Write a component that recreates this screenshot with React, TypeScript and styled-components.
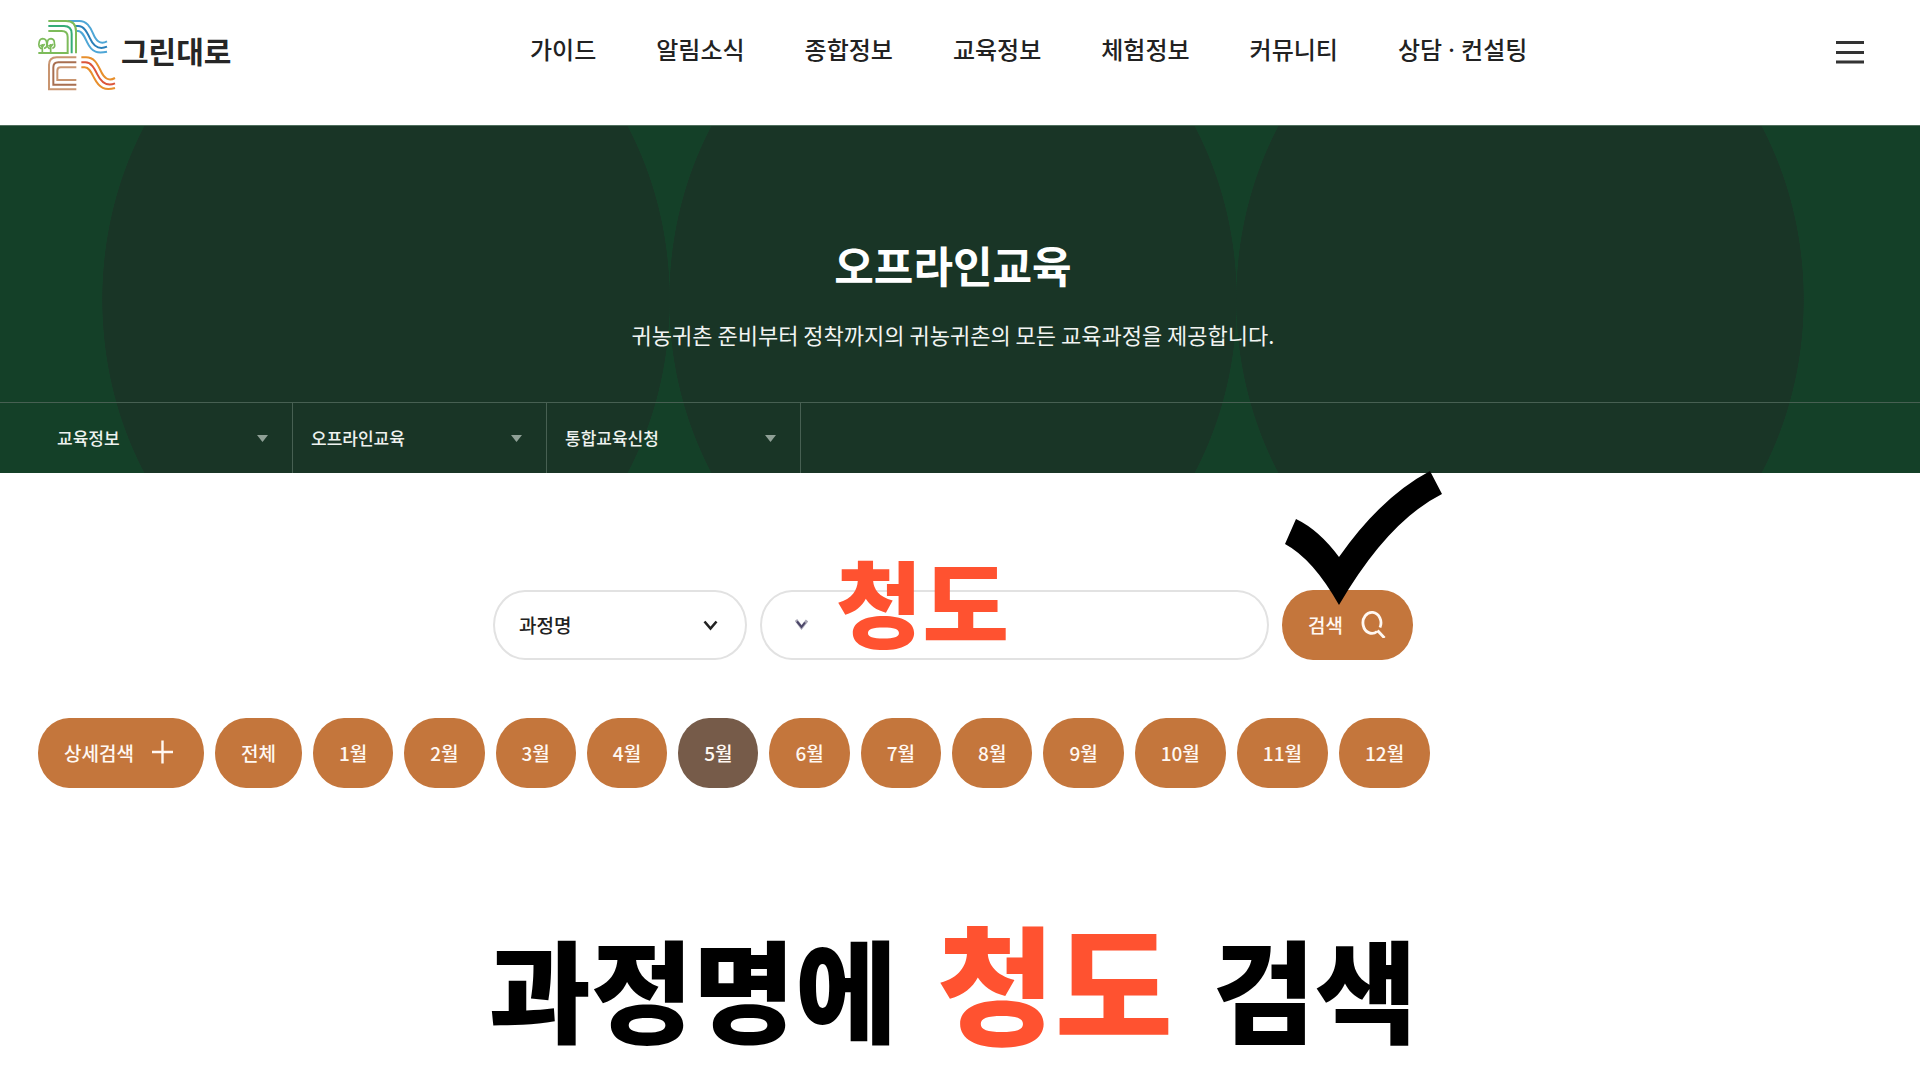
import React from "react";
import styled, { createGlobalStyle } from "styled-components";

const GlobalStyle = createGlobalStyle`
  *, *::before, *::after { box-sizing: border-box; }
  body {
    margin: 0;
    background: #fff;
    color: #222;
    font-family: "Noto Sans CJK KR", "Noto Sans", sans-serif;
  }
  h1, h2, p, ul { margin: 0; padding: 0; }
  button, input, select { font-family: inherit; margin: 0; }
`;

const Header = styled.header`
  display: flex;
  align-items: flex-start;
  height: 125px;
  padding: 20px 55px 0 38px;
`;

const LogoLink = styled.a`
  display: flex;
  align-items: flex-start;
  gap: 4px;
  width: 492px;
  color: #262626;
  font-size: 30px;
  font-weight: 700;
  line-height: 60px;
  text-decoration: none;

  svg { flex: none; }
`;

const Nav = styled.nav`
  flex: 1;

  ul {
    display: flex;
    gap: 60px;
    list-style: none;
  }
`;

const NavLink = styled.a`
  color: #222;
  font-family: "Noto Sans", "Noto Sans CJK KR", sans-serif;
  font-size: 24px;
  font-weight: 500;
  line-height: 60px;
  text-decoration: none;
  white-space: nowrap;
`;

const MenuButton = styled.button`
  display: grid;
  place-items: center;
  height: 64px;
  padding: 0;
  border: 0;
  background: none;
`;

const circle = (x: string) =>
  `radial-gradient(ellipse 284px 331px at ${x} 50%, #193526 99.8%, transparent 100%)`;

const Hero = styled.section`
  display: flex;
  flex-direction: column;
  justify-content: space-between;
  height: 348px;
  border-top: 1px solid #4f6f5d;
  background: ${circle("calc(50% - 574px)")}, ${circle("calc(50% - 7px)")},
    ${circle("calc(50% + 560px)")}, #144028;
  color: #fff;
`;

const HeroText = styled.div`
  padding: 106px 14px 0 0;
  text-align: center;

  h1 {
    font-size: 43px;
    font-weight: 700;
    line-height: 64px;
  }
  p {
    margin-top: 22px;
    font-size: 22px;
    line-height: 32px;
    color: #f1f4f2;
  }
`;

const Crumbs = styled.div`
  display: flex;
  height: 71px;
  padding-left: 39px;
  border-top: 1px solid #476052;
`;

const SelectBox = styled.div`
  display: grid;
  align-items: center;

  select, svg { grid-area: 1 / 1; }
  select {
    width: 100%;
    height: 100%;
    appearance: none;
    background: none;
    font-weight: 500;
  }
  svg {
    justify-self: end;
    pointer-events: none;
  }
`;

const Crumb = styled(SelectBox)`
  width: 254px;
  border-right: 1px solid #476052;

  select {
    padding: 0 48px 2px 18px;
    border: 0;
    color: #eef2ef;
    font-size: 17px;
  }
  option { color: #222; }
  svg { margin-right: 24px; }
`;

const Content = styled.main`
  padding: 117px 14px 0 0;
`;

const SearchForm = styled.form`
  display: flex;
  justify-content: center;
  gap: 13px;
`;

const KindSelect = styled(SelectBox)`
  width: 254px;
  height: 70px;

  select {
    padding: 0 56px 2px 24px;
    border: 2px solid #e2e2e2;
    border-radius: 32px / 35px;
    color: #222;
    font-size: 19px;
  }
  svg { margin-right: 29px; }
`;

const KeywordField = styled.div`
  position: relative;
  display: grid;
  width: 509px;
  height: 70px;

  input {
    width: 100%;
    padding: 0 40px;
    border: 2px solid #e2e2e2;
    border-radius: 32px / 35px;
    background: #fff;
    font-size: 19px;
  }
`;

const FieldChevron = styled.svg`
  position: absolute;
  left: 35px;
  top: 29px;
`;

const Note = styled.strong`
  position: absolute;
  left: 76px;
  top: -50px;
  color: #ff5230;
  font-size: 94px;
  font-weight: 900;
  line-height: 120px;
  white-space: nowrap;
  pointer-events: none;
`;

const Pill = styled.button<{ $active?: boolean }>`
  display: flex;
  align-items: center;
  gap: 17px;
  height: 70px;
  padding: 0 26px 2px;
  border: 0;
  border-radius: 31px / 35px;
  background: ${(p) => (p.$active ? "#765b49" : "#c4763c")};
  color: #fff8f2;
  font-size: 19px;
  font-weight: 500;
  white-space: nowrap;
`;

const SubmitArea = styled.div`
  position: relative;
`;

const CheckMark = styled.svg`
  position: absolute;
  left: 3px;
  top: -119px;
  pointer-events: none;
`;

const MonthBar = styled.div`
  display: flex;
  gap: 11px;
  padding: 58px 0 0 38px;
`;

const Guide = styled.h2`
  display: flex;
  justify-content: center;
  align-items: baseline;
  gap: 40px;
  margin-top: 102px;
  color: #000;
  font-size: 111px;
  font-weight: 900;
  line-height: 180px;
  white-space: nowrap;

  em {
    color: #ff5230;
    font-size: 128px;
    font-style: normal;
  }
`;

const Logo = () => (
  <svg width="79" height="72" viewBox="116 60 237 216" fill="none" strokeWidth="6" aria-hidden="true">
    <g stroke="#4ea6d6">
      <path d="M205 63H240C262 63 272 80 281 100C290 122 302 135 323 124" />
      <path stroke="#2a7fb8" d="M225 78H236C254 78 263 96 272 115C284 142 302 149 323 140" />
      <path d="M230 93H236C249 93 256 111 264 128C278 158 296 161 323 155" />
    </g>
    <g stroke="#7dbb5a">
      <path d="M147 63H200C220 63 230 75 230 94V160" />
      <path stroke="#35ac78" d="M147 78H194Q217 78 217 101V160" />
      <path d="M147 93H187Q205 93 205 111V159H117" />
      <path
        strokeWidth="5"
        d="M129 159V132M129 145H124Q117 140 119 130Q120 117 130 116Q142 117 142 130Q145 143 134 145M154 159V132M154 145H149Q142 140 144 130Q144 117 155 116Q166 118 165 130Q169 142 159 145M123 135L129 141L136 132M148 135L154 141L161 132"
      />
    </g>
    <g stroke="#c99570">
      <path d="M231 172H172Q149 172 149 195V268H231" />
      <path stroke="#a86f50" d="M231 187H177Q162 187 162 202V254H231" />
      <path d="M231 202H184Q174 202 174 212V240H231" />
    </g>
    <g stroke="#e88f2c">
      <path d="M246 172H260C284 172 293 190 303 210C314 235 327 245 347 234" />
      <path stroke="#dc553a" d="M246 187H258C276 187 285 205 294 223C307 250 325 259 347 250" />
      <path d="M246 202H256C270 202 276 218 285 235C300 264 317 273 347 264" />
    </g>
  </svg>
);

const Triangle = () => (
  <svg width="11" height="7" viewBox="0 0 11 7" aria-hidden="true">
    <path d="M0 0H11L5.5 7Z" fill="#8fa096" />
  </svg>
);

const navItems = ["가이드", "알림소식", "종합정보", "교육정보", "체험정보", "커뮤니티", "상담 · 컨설팅"];
const crumbs = ["교육정보", "오프라인교육", "통합교육신청"];
const months = Array.from({ length: 12 }, (_, i) => `${i + 1}월`);

export default function App() {
  return (
    <>
      <GlobalStyle />
      <Header>
        <LogoLink href="#">
          <Logo />
          <span>그린대로</span>
        </LogoLink>
        <Nav>
          <ul>
            {navItems.map((item) => (
              <li key={item}>
                <NavLink href="#">{item}</NavLink>
              </li>
            ))}
          </ul>
        </Nav>
        <MenuButton type="button" aria-label="전체메뉴">
          <svg width="30" height="24" viewBox="0 0 30 24" stroke="#333" strokeWidth="3">
            <path d="M1 2.5H29M1 12.5H29M1 22H29" />
          </svg>
        </MenuButton>
      </Header>

      <Hero>
        <HeroText>
          <h1>오프라인교육</h1>
          <p>귀농귀촌 준비부터 정착까지의 귀농귀촌의 모든 교육과정을 제공합니다.</p>
        </HeroText>
        <Crumbs>
          {crumbs.map((name) => (
            <Crumb key={name}>
              <select aria-label={name}>
                <option>{name}</option>
              </select>
              <Triangle />
            </Crumb>
          ))}
        </Crumbs>
      </Hero>

      <Content>
        <SearchForm onSubmit={(e) => e.preventDefault()}>
          <KindSelect>
            <select aria-label="검색 구분">
              <option>과정명</option>
            </select>
            <svg width="15" height="11" viewBox="0 0 15 11" fill="none" stroke="#222" strokeWidth="2.6" aria-hidden="true">
              <path d="M1.5 1.5L7.5 8.5L13.5 1.5" />
            </svg>
          </KindSelect>
          <KeywordField>
            <input type="text" aria-label="검색어" />
            <FieldChevron width="13" height="11" viewBox="0 0 13 11" fill="none" aria-hidden="true">
              <path d="M1 1L6.5 8.5L12 1.5" stroke="#a9a7b6" strokeWidth="3" />
              <path d="M2 2.5L6.5 8L10 3.5" stroke="#4b4668" strokeWidth="2" />
            </FieldChevron>
            <Note>청도</Note>
          </KeywordField>
          <SubmitArea>
            <Pill type="submit">
              검색
              <svg width="27" height="28" viewBox="0 0 27 28" fill="none" stroke="#fff8f2" strokeWidth="2.8" aria-hidden="true">
                <path d="M20 17.5A9 10.5 0 1 0 17 21.5M17.5 20.5L24.5 28" />
              </svg>
            </Pill>
            <CheckMark width="158" height="135" viewBox="0 0 158 135" aria-hidden="true">
              <path d="M11 48Q34 59 54 86Q96 26 145 0L157 23Q103 50 54 134Q28 88 0 73Z" fill="#000" />
            </CheckMark>
          </SubmitArea>
        </SearchForm>

        <MonthBar>
          <Pill type="button">
            상세검색
            <svg width="27" height="24" viewBox="0 0 27 24" stroke="#fff8f2" strokeWidth="2.4" aria-hidden="true">
              <path d="M1 12H22M11.5 0.5V23.5" />
            </svg>
          </Pill>
          <Pill type="button">전체</Pill>
          {months.map((m) => (
            <Pill key={m} type="button" $active={m === "5월"}>
              {m}
            </Pill>
          ))}
        </MonthBar>

        <Guide>
          <span>과정명에</span>
          <em>청도</em>
          <span>검색</span>
        </Guide>
      </Content>
    </>
  );
}
